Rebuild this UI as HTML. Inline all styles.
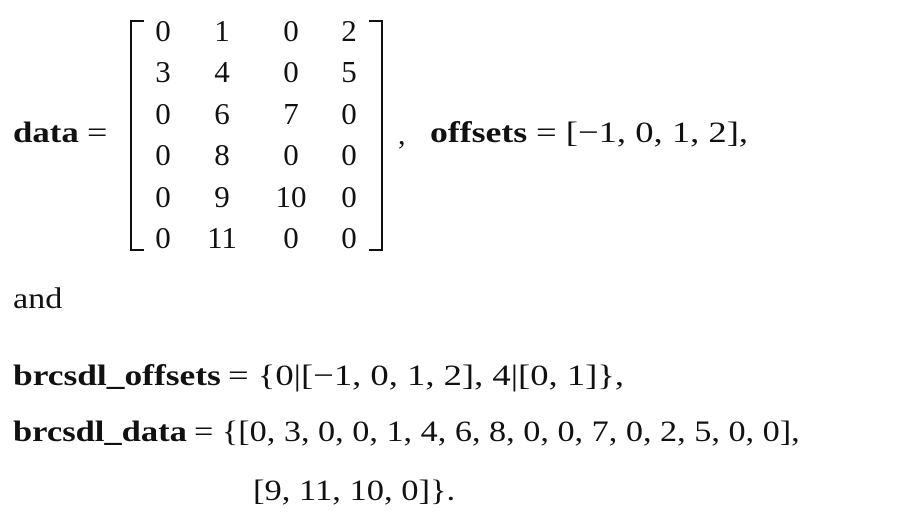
<!DOCTYPE html>
<html><head><style>
html,body{margin:0;padding:0;background:#fff;}
body{width:905px;height:522px;position:relative;overflow:hidden;font-family:"Liberation Serif",serif;font-size:30px;color:#111;}
.a{position:absolute;white-space:nowrap;line-height:1;transform-origin:0 0;}
.b{font-weight:bold;transform:scaleX(1.16);}
.n{position:absolute;width:40px;text-align:center;line-height:1;font-size:31px;}
.br{position:absolute;border:2.5px solid #111;width:12px;top:20px;height:227px;}
</style></head><body>
<span class="a b" style="left:13px;top:118px">data</span>
<span class="a" style="left:87px;top:118px;transform:scaleX(1.2)">=</span>
<div class="br" style="left:130px;border-right:none"></div>
<div class="br" style="left:369px;border-left:none"></div>
<div class="n" style="left:143px;top:15px">0</div><div class="n" style="left:202px;top:15px">1</div><div class="n" style="left:271px;top:15px">0</div><div class="n" style="left:329px;top:15px">2</div>
<div class="n" style="left:143px;top:56px">3</div><div class="n" style="left:202px;top:56px">4</div><div class="n" style="left:271px;top:56px">0</div><div class="n" style="left:329px;top:56px">5</div>
<div class="n" style="left:143px;top:98px">0</div><div class="n" style="left:202px;top:98px">6</div><div class="n" style="left:271px;top:98px">7</div><div class="n" style="left:329px;top:98px">0</div>
<div class="n" style="left:143px;top:139px">0</div><div class="n" style="left:202px;top:139px">8</div><div class="n" style="left:271px;top:139px">0</div><div class="n" style="left:329px;top:139px">0</div>
<div class="n" style="left:143px;top:181px">0</div><div class="n" style="left:202px;top:181px">9</div><div class="n" style="left:271px;top:181px">10</div><div class="n" style="left:329px;top:181px">0</div>
<div class="n" style="left:143px;top:222px">0</div><div class="n" style="left:202px;top:222px">11</div><div class="n" style="left:271px;top:222px">0</div><div class="n" style="left:329px;top:222px">0</div>
<span class="a" style="left:398px;top:120px">,</span>
<span class="a b" style="left:430px;top:118px;transform:scaleX(1.19)">offsets</span>
<span class="a" style="left:536px;top:118px;transform:scaleX(1.22)">= [−1, 0, 1, 2],</span>
<span class="a" style="left:13px;top:284px;transform:scaleX(1.14)">and</span>
<span class="a b" style="left:13px;top:361px;transform:scaleX(1.18)">brcsdl_offsets</span>
<span class="a" style="left:228px;top:361px;transform:scaleX(1.22)">= {0|[−1, 0, 1, 2], 4|[0, 1]},</span>
<span class="a b" style="left:13px;top:417px;transform:scaleX(1.15)">brcsdl_data</span>
<span class="a" style="left:194px;top:417px;transform:scaleX(1.14)">= {[0, 3, 0, 0, 1, 4, 6, 8, 0, 0, 7, 0, 2, 5, 0, 0],</span>
<span class="a" style="left:253px;top:476px;transform:scaleX(1.15)">[9, 11, 10, 0]}.</span>
</body></html>
